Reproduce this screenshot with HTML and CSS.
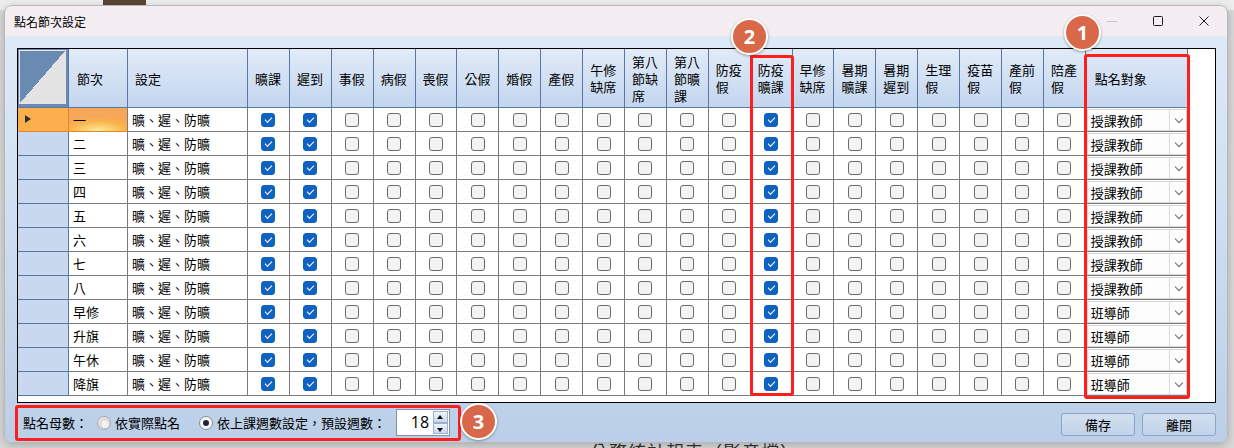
FILE: index.html
```html
<!DOCTYPE html>
<html lang="zh-Hant">
  <head>
    <meta charset="UTF-8" />
    <title>點名節次設定</title>
    <link rel="stylesheet" href="styles.css">
  </head>
  <body>
    <!-- 後方視窗殘影 -->
    <div class="behind-top"><span class="behind-pic"></span></div>
    <div class="behind-bottom">公務統計報表（影音檔）</div>

    <div class="window">
      <div class="titlebar">
        <span class="title">點名節次設定</span>
        <div class="win-btns">
          <span class="wb">
            <svg width="10" height="10" viewBox="0 0 10 10"><path d="M0 5.5h10" stroke="#c4c4c4" stroke-width="1"/></svg>
          </span>
          <span class="wb">
            <svg width="10" height="10" viewBox="0 0 10 10"><rect x="0.5" y="0.5" width="9" height="9" rx="1" fill="none" stroke="#1b1b1b" stroke-width="1"/></svg>
          </span>
          <span class="wb">
            <svg width="10" height="10" viewBox="0 0 10 10"><path d="M0.5 0.5l9 9M9.5 0.5l-9 9" stroke="#1b1b1b" stroke-width="1"/></svg>
          </span>
        </div>
      </div>

      <div class="client">
        <!-- 節次表格 -->
        <div class="grid" id="grid">
          <div class="hd corner"><span></span></div>
          <div class="hd">節次</div>
          <div class="hd tight">設定</div>
          <div class="hd ck">曠課</div>
          <div class="hd ck">遲到</div>
          <div class="hd ck">事假</div>
          <div class="hd ck">病假</div>
          <div class="hd ck">喪假</div>
          <div class="hd ck">公假</div>
          <div class="hd ck">婚假</div>
          <div class="hd ck">產假</div>
          <div class="hd ck">午修缺席</div>
          <div class="hd ck">第八節缺席</div>
          <div class="hd ck">第八節曠課</div>
          <div class="hd ck">防疫假</div>
          <div class="hd ck">防疫曠課</div>
          <div class="hd ck">早修缺席</div>
          <div class="hd ck">暑期曠課</div>
          <div class="hd ck">暑期遲到</div>
          <div class="hd ck">生理假</div>
          <div class="hd ck">疫苗假</div>
          <div class="hd ck">產前假</div>
          <div class="hd ck">陪產假</div>
          <div class="hd wide">點名對象</div>
          <div class="pad"></div>
        </div>

        <!-- 下方設定列 -->
        <div class="footer">
          <div class="opts">
            <span class="lbl">點名母數：</span>
            <label class="radio off"><span class="dot"></span>依實際點名</label>
            <label class="radio on"><span class="dot"></span>依上課週數設定，預設週數：</label>
            <div class="spin">
              <span class="num">18</span>
              <span class="arrows"><b class="up"></b><b class="down"></b></span>
            </div>
          </div>
          <div class="actions">
            <button>備存</button>
            <button>離開</button>
          </div>
        </div>
      </div>
    </div>

    <!-- 標註 -->
    <div class="mark mark-who"></div>
    <div class="mark mark-col"></div>
    <div class="mark mark-foot"></div>
    <div class="badge b1">1</div>
    <div class="badge b2">2</div>
    <div class="badge b3">3</div>

    <script>
      const periods = ["一", "二", "三", "四", "五", "六", "七", "八", "早修", "升旗", "午休", "降旗"];
      const checkedCols = [0, 1, 12]; // 曠課、遲到、防疫曠課
      const grid = document.getElementById("grid");

      let html = "";
      periods.forEach((p, i) => {
        const sel = i === 0 ? " sel" : "";
        html += `<div class="rh${sel}"></div>`;
        html += `<div class="c txt${sel}">${p}</div>`;
        html += `<div class="c txt">曠、遲、防曠</div>`;
        for (let k = 0; k < 20; k++) {
          const on = checkedCols.includes(k) ? " on" : "";
          html += `<div class="c"><span class="cb${on}"></span></div>`;
        }
        const who = i < 8 ? "授課教師" : "班導師";
        html += `<div class="c who"><div class="combo"><span>${who}</span><i></i></div></div>`;
        html += `<div class="pad"></div>`;
      });
      grid.insertAdjacentHTML("beforeend", html);
    </script>
  </body>
</html>
```

FILE: styles.css
```css
* {
  box-sizing: border-box;
}

body {
  margin: 0;
  width: 1234px;
  height: 448px;
  position: relative;
  overflow: hidden;
  background: #d8d8d8;
  font-family: "Noto Sans CJK TC", "Noto Sans", sans-serif;
  font-size: 13px;
  color: #000;
}

/* 後方視窗 */
.behind-top {
  position: absolute;
  left: 0;
  top: 0;
  width: 100%;
  height: 10px;
  background: #eeeeee;
}

.behind-pic {
  position: absolute;
  left: 103px;
  top: 0;
  width: 43px;
  height: 10px;
  background: #5a4535;
}

.behind-bottom {
  position: absolute;
  left: 590px;
  top: 438px;
  font-size: 18px;
  color: #333;
  letter-spacing: 1px;
}

/* 視窗 */
.window {
  position: absolute;
  left: 4px;
  top: 5px;
  width: 1224px;
  height: 438px;
  border: 1px solid #b8b8b8;
  border-radius: 8px;
  overflow: hidden;
  box-shadow: 0 2px 8px rgba(0, 0, 0, 0.22);
  display: flex;
  flex-direction: column;
}

.titlebar {
  flex: none;
  height: 30px;
  background: #f4eef2;
  display: flex;
  align-items: center;
  padding-left: 9px;
}

.title {
  flex: 1;
  font-size: 12px;
}

.win-btns {
  display: flex;
  align-self: stretch;
}

.wb {
  width: 46px;
  display: flex;
  align-items: center;
  justify-content: center;
}

.client {
  flex: 1;
  display: flex;
  flex-direction: column;
  padding: 12px 11px 0 12px;
  background: linear-gradient(#dfeaf8, #bbcfe8);
}

/* 表格 */
.grid {
  display: grid;
  grid-template-columns: 51px 59px 120px repeat(20, 41.9px) 102px 1fr;
  grid-template-rows: 59px repeat(12, 24px) 1fr;
  height: 355px;
  border: 1px solid #000;
  background: #fff;
}

.hd {
  display: flex;
  align-items: center;
  padding: 0 4px 0 8px;
  line-height: 17px;
  background: linear-gradient(#e1ebf8, #c3d6ef);
  border-right: 1px solid #5a78a5;
  border-bottom: 1px solid #5a78a5;
}

.hd.tight {
  padding-left: 7px;
}

.hd.ck {
  padding: 0 6px 0 7px;
}

.hd.wide {
  padding-left: 9px;
}

.hd.corner {
  padding: 1px 2px 3px 1px;
  background: #6a89b3;
}

.hd.corner span {
  display: block;
  width: 100%;
  height: 100%;
  border: 1px solid #e6e6e6;
  background: linear-gradient(to bottom right, #6a89b3 50%, #e3e3e3 50%);
}

.pad {
  background: #fff;
}

.rh {
  position: relative;
  background: #c8d8ee;
  border-right: 1px solid #5a78a5;
  border-bottom: 1px solid #5a78a5;
}

.rh.sel {
  background: #fbb04d;
  border-right-color: #e5862c;
  border-bottom-color: #e5862c;
}

.rh.sel::after {
  content: "";
  position: absolute;
  left: 7px;
  top: 7px;
  border-left: 6px solid #2f2f2f;
  border-top: 4.5px solid transparent;
  border-bottom: 4.5px solid transparent;
}

.c {
  display: flex;
  align-items: center;
  justify-content: center;
  border-right: 1px solid #7b7b7b;
  border-bottom: 1px solid #7b7b7b;
}

.c.txt {
  justify-content: flex-start;
  padding-left: 4px;
}

.c.txt.sel {
  background: radial-gradient(ellipse 70% 60% at 50% 100%, #fdeca2 0%, #fab449 70%, #f6a75a 100%);
  border-bottom-color: #e5862c;
}

.cb {
  position: relative;
  width: 14px;
  height: 14px;
  border: 1px solid #6c6c6c;
  border-radius: 3px;
  background: #f3f3f3;
}

.cb.on {
  background: #0f62c0;
  border-color: #0f62c0;
}

.cb.on::after {
  content: "";
  position: absolute;
  left: 3px;
  top: 3px;
  width: 6px;
  height: 3px;
  border-left: 1.2px solid #fff;
  border-bottom: 1.2px solid #fff;
  transform: rotate(-45deg);
}

.c.who {
  display: block;
  padding: 1px 0 0 1px;
}

.combo {
  display: flex;
  align-items: center;
  width: 100px;
  height: 22px;
  border: 1px solid #d6d6d6;
  background: #fdfdfd;
}

.combo span {
  flex: 1;
  padding-left: 3px;
}

.combo i {
  position: relative;
  width: 17px;
  height: 100%;
  border-left: 1px solid #dadada;
}

.combo i::after {
  content: "";
  position: absolute;
  left: 6px;
  top: 6px;
  width: 5px;
  height: 5px;
  border-right: 1px solid #666;
  border-bottom: 1px solid #666;
  transform: rotate(45deg);
}

/* 下方設定列 */
.footer {
  flex: 1;
  display: flex;
  align-items: center;
  justify-content: space-between;
  padding-left: 6px;
}

.opts {
  display: flex;
  align-items: center;
}

.radio {
  display: flex;
  align-items: center;
  gap: 4px;
}

.radio.off {
  margin-left: 9px;
}

.radio.on {
  margin-left: 19px;
}

.radio .dot {
  position: relative;
  width: 14px;
  height: 14px;
  border-radius: 50%;
  border: 1px solid #8a8a8a;
  background: #f7f7f7;
}

.radio.off .dot {
  border-color: #a9a9a9;
  background: #e4e4e4;
}

.radio.off .dot::after {
  content: "";
  position: absolute;
  left: 2px;
  top: 2px;
  width: 8px;
  height: 8px;
  border-radius: 50%;
  border: 1px solid #c8c8c8;
  background: #f2f2f2;
}

.radio.on .dot::after {
  content: "";
  position: absolute;
  left: 3px;
  top: 3px;
  width: 6px;
  height: 6px;
  border-radius: 50%;
  background: #1b2540;
}

.spin {
  display: flex;
  align-items: stretch;
  margin-left: 10px;
  width: 54px;
  height: 27px;
  border: 1px solid #7f93ad;
  background: #fff;
  padding: 1px;
}

.spin .num {
  flex: 1;
  text-align: right;
  padding-right: 4px;
  font-family: "Open Sans", "Noto Sans", sans-serif;
  font-size: 16px;
  line-height: 23px;
}

.spin .arrows {
  display: flex;
  flex-direction: column;
  width: 15px;
}

.spin b {
  flex: 1;
  position: relative;
  border: 1px solid #9fb1c9;
  background: linear-gradient(#f1f5fb, #c9d7ea);
}

.spin b::after {
  content: "";
  position: absolute;
  left: 3px;
  border-left: 3.5px solid transparent;
  border-right: 3.5px solid transparent;
}

.spin b.up::after {
  top: 3px;
  border-bottom: 4px solid #111;
}

.spin b.down::after {
  top: 4px;
  border-top: 4px solid #111;
}

.actions {
  display: flex;
  gap: 7px;
  margin-top: 3px;
}

.actions button {
  width: 74px;
  height: 23px;
  padding: 0;
  font-family: "Noto Sans CJK TC", sans-serif;
  font-size: 13px;
  color: #000;
  border: 1px solid #8da5c5;
  border-radius: 3px;
  background: linear-gradient(#d3e0f0, #c1d2e9);
}

/* 標註 */
.mark {
  position: absolute;
  border: 3px solid #ff1e1e;
  border-radius: 3px;
}

.mark-who {
  left: 1084px;
  top: 54px;
  width: 106px;
  height: 345px;
}

.mark-col {
  left: 750px;
  top: 55px;
  width: 44px;
  height: 341px;
}

.mark-foot {
  left: 15px;
  top: 405px;
  width: 446px;
  height: 36px;
}

.badge {
  position: absolute;
  width: 37px;
  height: 37px;
  border-radius: 50%;
  border: 2px solid #fff;
  background: #d9674a;
  box-shadow: 0 1px 3px rgba(0, 0, 0, 0.35);
  color: #fff;
  font-family: "Open Sans", "Liberation Sans", sans-serif;
  font-weight: bold;
  font-size: 20px;
  line-height: 33px;
  text-align: center;
}

.b1 {
  left: 1064px;
  top: 14px;
}

.b2 {
  left: 731px;
  top: 18px;
}

.b3 {
  left: 460px;
  top: 403px;
}
```
